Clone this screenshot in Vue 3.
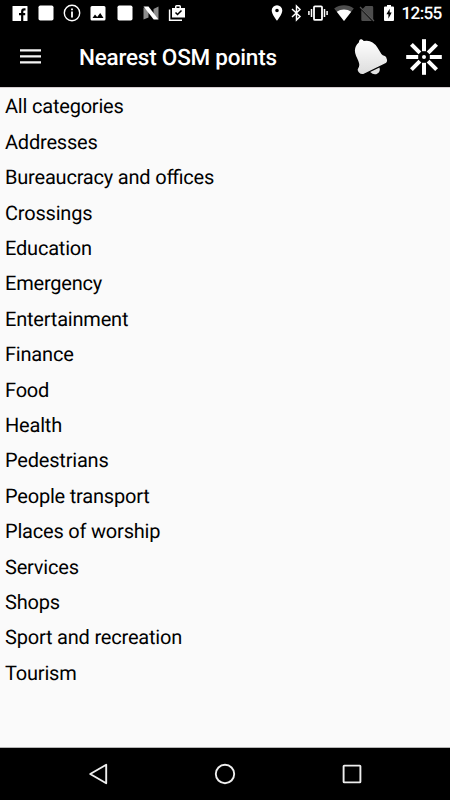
<script setup>
import { ref } from 'vue'

const title = 'Nearest OSM points'
const time = '12:55'

const categories = ref([
  'All categories',
  'Addresses',
  'Bureaucracy and offices',
  'Crossings',
  'Education',
  'Emergency',
  'Entertainment',
  'Finance',
  'Food',
  'Health',
  'Pedestrians',
  'People transport',
  'Places of worship',
  'Services',
  'Shops',
  'Sport and recreation',
  'Tourism',
])

const rays = [0, 45, 90, 135, 180, 225, 270, 315]
</script>

<template>
  <div class="screen">
    <header class="status-bar">
      <div class="notifications">
        <svg viewBox="0 0 20 20">
          <rect x="2.5" y="3" width="15" height="15" rx=".6" fill="#fff" />
          <path fill="none" stroke="#000" stroke-width="2.2" d="M15.500 6.300h-1.200q-2.100 0-2.100 2.200V18M9 11.200h6.200" />
        </svg>
        <svg viewBox="0 0 20 20">
          <rect x="2.5" y="2.5" width="15" height="15" rx="1.8" fill="#fff" />
        </svg>
        <svg viewBox="0 0 20 20">
          <circle cx="10" cy="10" r="7.7" fill="none" stroke="#fff" stroke-width="1.4" />
          <path fill="#fff" d="M9.100 5.500h1.800v1.800H9.100zM9.100 8.500h1.800v6H9.100z" />
        </svg>
        <svg viewBox="0 0 20 20">
          <path fill="#fff" fill-rule="evenodd" d="M4 3h12a1.500 1.500 0 0 1 1.500 1.500v11.500a1.500 1.500 0 0 1-1.500 1.500H4A1.500 1.500 0 0 1 2.500 16V4.500A1.500 1.500 0 0 1 4 3zM4.500 15h11l-3.300-5-3 4-2.200-2.500z" />
        </svg>
        <svg viewBox="0 0 20 20">
          <rect x="2.5" y="2.5" width="15" height="15" rx="1.8" fill="#fff" />
        </svg>
        <svg viewBox="0 0 20 20">
          <path fill="#8c8c8c" d="M2.500 4.500 7.500 8v6.500l-5 2zM17.500 3.500v13L12.500 12V6z" />
          <path fill="#fff" d="M2.500 3.500h5l10 13h-4.800z" />
        </svg>
        <svg viewBox="0 0 20 20">
          <path fill="none" stroke="#fff" stroke-width="1.5" d="M2.600 6.500v10.800H15" />
          <path fill="#fff" fill-rule="evenodd" d="M5 5h3V3.500Q8 2 9.500 2h3Q14 2 14 3.500V5h4v9.500H5zM9.500 5h3V3.400h-3z" />
          <path fill="none" stroke="#000" stroke-width="1.5" d="m8.500 9.500 2 2 4-4" />
        </svg>
      </div>
      <div class="system">
        <svg class="pin" viewBox="0 0 12 20">
          <path fill="#fff" fill-rule="evenodd" d="M6 2.200a5.300 5.300 0 0 0-5.300 5.300C.7 11.300 6 17.800 6 17.800s5.300-6.500 5.300-10.300A5.300 5.300 0 0 0 6 2.200zM6 5.700a1.800 1.800 0 1 1 0 3.600 1.800 1.800 0 0 1 0-3.600z" />
        </svg>
        <svg class="bluetooth" viewBox="0 0 12 20">
          <path fill="none" stroke="#fff" stroke-width="1.5" d="m1 6 8 7.500L5.500 17V3L9 6.500 1 14" />
        </svg>
        <svg class="vibrate" viewBox="0 0 20 20">
          <rect x="6" y="3.3" width="8" height="13.6" rx="1" fill="none" stroke="#fff" stroke-width="1.8" />
          <path stroke="#fff" stroke-width="1.5" d="M3.500 6v8M.9 8v4M16.500 6v8M19.100 8v4" />
        </svg>
        <svg class="wifi" viewBox="0 0 20 20">
          <path fill="#4d4d4d" d="M10 18 .2 5.500Q4.500 2.300 10 2.300t9.800 3.200z" />
          <path fill="#fff" d="M10 18 2.800 8.700Q6 6.400 10 6.400t7.200 2.300z" />
        </svg>
        <svg class="sim" viewBox="0 0 16 20">
          <path fill="#4d4d4d" d="M6.500 3H13q1.200 0 1.200 1.200V17L3.600 5.900zM2.300 7.100 12.900 18H3.500q-1.200 0-1.200-1.200z" />
          <path fill="none" stroke="#555" stroke-width="1.2" d="m1 4 14 14" />
        </svg>
        <svg class="battery" viewBox="0 0 10 20">
          <path fill="#fff" d="M3 2h4v1.500h2q1 0 1 1V17q0 1-1 1H1q-1 0-1-1V4.500q0-1 1-1h2z" />
          <path fill="#000" d="M5.700 5.800v3.700h2L4.400 15.700v-4.500h-2z" />
        </svg>
        <span class="time">{{ time }}</span>
      </div>
    </header>

    <div class="toolbar">
      <svg class="menu" viewBox="0 0 22 18">
        <path stroke="#f5f5f5" stroke-width="2.300" d="M0 2.400h21M0 8.400h21M0 14.400h21" />
      </svg>
      <h1 class="title">{{ title }}</h1>
      <svg class="bell" viewBox="0 0 36 38">
        <defs>
          <linearGradient id="bellFill" x1="0" y1="0" x2="0" y2="1">
            <stop offset="0" stop-color="#fff" />
            <stop offset="1" stop-color="#ddd" />
          </linearGradient>
        </defs>
        <path fill="url(#bellFill)" d="M4.800 4.500Q5.200.7 7.500 1.200q1.600.3 2.200 1.900 8.300-2 13.700 6.400 2.500 4 4 6.600 1 1.600 3.400 1.900 1.400.4 2.200 3.700.4 2.200-1.200 3.300L9.300 36Q6.800 36.500 5 34.500q-2.100-2.200-.9-4.100 1.600-2.300 1-4.800-.4-2.300-3-7.600-3.400-8.200 2.700-13.500z" />
        <path fill="#e3e3e3" d="m16.200 34 9.300-4.600q1.200 3.900-2 6-3.500 2.200-7.300-1.400z" />
      </svg>
      <svg class="locate" viewBox="0 0 36 36">
        <g stroke="#fff" stroke-width="4">
          <path v-for="angle in rays" :key="angle" d="M18 .2v12" :transform="`rotate(${angle} 18 18)`" />
        </g>
        <circle cx="18" cy="18" r="2" fill="#fff" />
      </svg>
    </div>

    <main class="content">
      <ul class="categories">
        <li v-for="category in categories" :key="category">{{ category }}</li>
      </ul>
    </main>

    <nav class="nav-bar">
      <svg viewBox="0 0 24 24">
        <path fill="none" stroke="#eee" stroke-width="1.9" stroke-linejoin="round" d="M19.200 2.700v18.600L3.200 12z" />
      </svg>
      <svg viewBox="0 0 24 24">
        <circle cx="12" cy="12" r="9.2" fill="none" stroke="#eee" stroke-width="1.9" />
      </svg>
      <svg viewBox="0 0 24 24">
        <rect x="3.6" y="3.6" width="16.8" height="16.8" rx=".6" fill="none" stroke="#eee" stroke-width="1.9" />
      </svg>
    </nav>
  </div>
</template>

<style>
body {
  margin: 0;
}
</style>

<style scoped>
.screen {
  display: flex;
  flex-direction: column;
  width: 450px;
  height: 800px;
  overflow: hidden;
  background: #fafafa;
  color: #000;
  font-family: Roboto, sans-serif;
  text-rendering: geometricPrecision;
}

svg {
  display: block;
  flex: none;
}

.status-bar {
  display: flex;
  justify-content: space-between;
  box-sizing: border-box;
  height: 30px;
  padding: 3px 9px 0 9.5px;
  background: #000;
  color: #fff;
}

.notifications {
  display: flex;
  gap: 6.25px;
}

.notifications svg {
  width: 20px;
  height: 20px;
}

.system {
  display: flex;
}

.system svg {
  height: 20px;
}

.pin {
  width: 12px;
  margin-right: 8px;
}

.bluetooth {
  width: 12px;
  margin-right: 5px;
}

.vibrate {
  width: 20px;
  margin-right: 6px;
}

.wifi {
  width: 20px;
  margin-right: 5px;
}

.sim {
  width: 16px;
  margin-right: 9px;
}

.battery {
  width: 10px;
  margin-right: 8px;
}

.time {
  width: 39.5px;
  font-size: 17.2px;
  font-weight: 500;
  line-height: 23px;
  letter-spacing: -0.7px;
  white-space: nowrap;
}

.toolbar {
  display: flex;
  align-items: center;
  box-sizing: border-box;
  height: 57px;
  padding: 0 8px 3px 20px;
  background: #000;
  color: #fff;
}

.menu {
  width: 22px;
  height: 18px;
}

.title {
  flex: 1;
  margin: 0 0 0 37px;
  padding-top: 2px;
  font-size: 22.5px;
  font-weight: 500;
  line-height: 28px;
  letter-spacing: -0.22px;
  white-space: nowrap;
}

.bell {
  width: 36px;
  height: 38px;
  margin-right: 16px;
}

.locate {
  width: 36px;
  height: 36px;
}

.content {
  flex: 1;
  border-top: 1px solid #d5cdd0;
  border-bottom: 1px solid #b5b5b5;
}

.categories {
  margin: 0;
  padding: 0.4px 5px 0;
  list-style: none;
}

.categories li {
  height: 35.42px;
  font-size: 20px;
  line-height: 36px;
  letter-spacing: -0.2px;
  font-feature-settings: 'liga' 1;
}

.nav-bar {
  display: flex;
  justify-content: center;
  align-items: center;
  gap: 102.5px;
  height: 52px;
  background: #000;
}

.nav-bar svg {
  width: 24px;
  height: 24px;
}
</style>
